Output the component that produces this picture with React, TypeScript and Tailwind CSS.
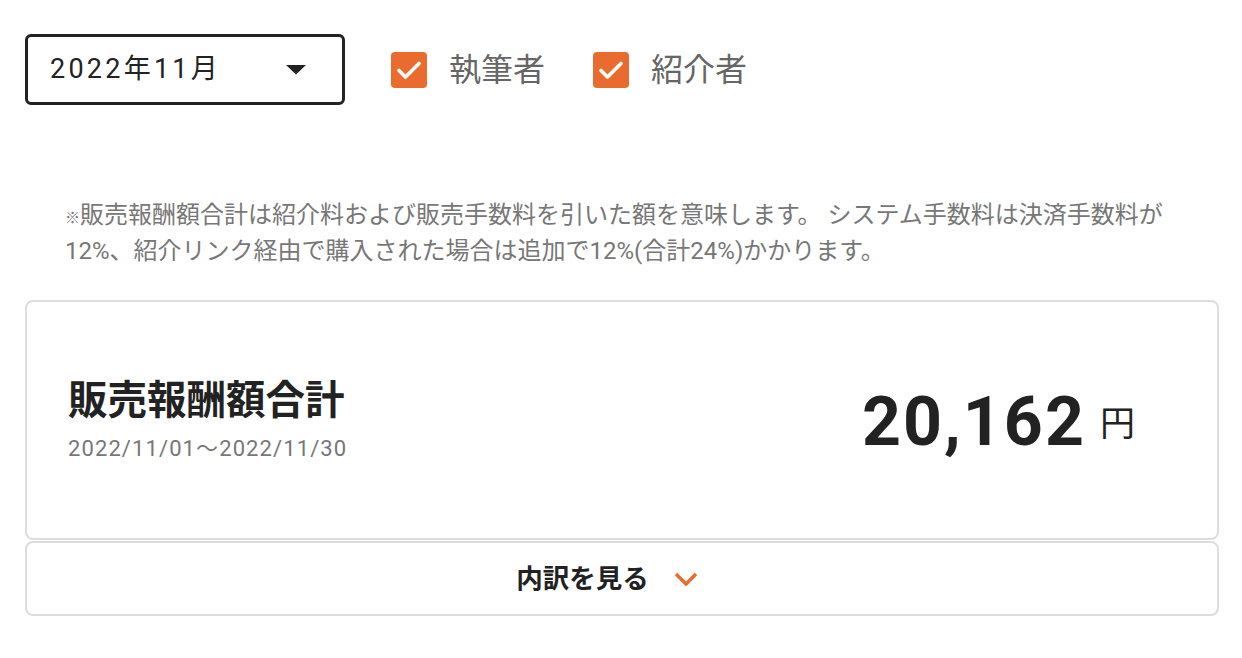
import React, { useState } from 'react'

const font = { fontFamily: '"Roboto", "Noto Sans CJK JP", sans-serif' }

function CheckBox(props: { label: string; checked: boolean; onToggle: () => void }) {
    const { label, checked, onToggle } = props
    return (
        <button type="button" onClick={onToggle} className="flex items-center gap-[22px]">
            <span
                className={
                    checked
                        ? 'w-[36px] h-[36px] rounded-[4px] bg-[#e96b2e] flex items-center justify-center'
                        : 'w-[36px] h-[36px] rounded-[4px] border-2 border-[#999] bg-white'
                }
            >
                {checked && (
                    <svg width="28" height="28" viewBox="0 0 28 28" fill="none">
                        <path d="M4 14.5l6.5 6.5L24 7.5" stroke="#fff" strokeWidth="3.6" strokeLinecap="round" strokeLinejoin="round" />
                    </svg>
                )}
            </span>
            <span className="text-[32px] leading-none text-[#666]">{label}</span>
        </button>
    )
}

export default function App() {
    const [writer, setWriter] = useState(true)
    const [referrer, setReferrer] = useState(true)
    const [open, setOpen] = useState(false)

    return (
        <div className="min-h-screen bg-white pl-[25px] pr-[23px] pt-[34px]" style={font}>
            {/* filters */}
            <div className="flex items-center">
                <div className="w-[320px] h-[71px] rounded-[6px] border-[3px] border-[#222] flex items-center justify-between pl-[22px] pr-[36px]">
                    <span className="text-[27px] tracking-[0.12em] text-[#222]">2022年11月</span>
                    <svg width="20" height="10" viewBox="0 0 20 10">
                        <path d="M0 0h20L10 9.5z" fill="#222" />
                    </svg>
                </div>
                <div className="ml-[46px] flex items-center gap-[48px]">
                    <CheckBox label="執筆者" checked={writer} onToggle={() => setWriter(!writer)} />
                    <CheckBox label="紹介者" checked={referrer} onToggle={() => setReferrer(!referrer)} />
                </div>
            </div>

            {/* note */}
            <p className="mt-[94px] pl-[40px] pr-[20px] text-[24px] leading-[33px] text-[#777]">
                <span className="text-[15px]">※</span>販売報酬額合計は紹介料および販売手数料を引いた額を意味します。 システム手数料は決済手数料が12%、紹介リンク経由で購入された場合は追加で12%(合計24%)かかります。
            </p>

            {/* summary card */}
            <div className="mt-[32px] h-[240px] rounded-[8px] border-2 border-[#ddd] flex items-center justify-between pl-[41px] pr-[82px]">
                <div className="flex flex-col">
                    <span className="text-[39.5px] leading-[48px] font-bold text-[#222]">販売報酬額合計</span>
                    <span className="mt-[10px] text-[22px] leading-[28px] tracking-[0.05em] text-[#777]">2022/11/01〜2022/11/30</span>
                </div>
                <div className="flex items-end text-[#222] mt-[4px]">
                    <span className="text-[68px] leading-none font-bold tracking-[0.03em]">20,162</span>
                    <span className="ml-[14px] mb-[14px] text-[35px] leading-none">円</span>
                </div>
            </div>

            <button
                type="button"
                onClick={() => setOpen(!open)}
                className="mt-[1px] w-full h-[75px] rounded-[8px] border-2 border-[#ddd] flex items-center justify-center gap-[25px] pr-[30px]"
            >
                <span className="text-[26.5px] font-bold text-[#222]">内訳を見る</span>
                <svg width="24" height="14" viewBox="0 0 24 14" className={open ? 'rotate-180' : ''}>
                    <path d="M2 2l10 10L22 2" stroke="#e96b2e" strokeWidth="3.4" fill="none" />
                </svg>
            </button>
        </div>
    )
}
